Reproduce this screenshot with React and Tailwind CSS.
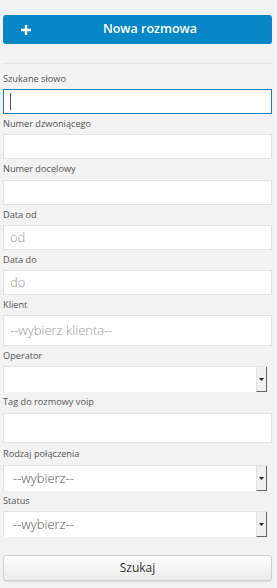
import React from 'react'

const font = { fontFamily: '"Open Sans", "Noto Sans", sans-serif' }

const Label = ({ children, h = 'h-[20px]' }) => (
  <div className={`${h} flex items-center pb-[1px] text-[9.2px] text-[#555]`}>{children}</div>
)

const TextBox = ({ h = 'h-[25px]', placeholder, focused }) => (
  <div
    className={`${h} w-full bg-white flex items-center px-[6px] text-[13px] font-light text-[#9a9a9a] ${
      focused ? 'border border-[#1b7fbd]' : 'border border-[#e2e2e2]'
    }`}
  >
    {focused && <span className="block w-px h-[17px] bg-[#555]" />}
    {placeholder}
  </div>
)

const SelectBox = ({ value }) => (
  <div className="h-[26px] w-[264px] flex bg-white border border-[#e2e2e2] border-r-0 border-b-0">
    <div className="flex-1 flex items-center px-[9px] text-[13px] font-light text-[#555]">{value}</div>
    <div className="w-[11px] flex items-center justify-center bg-[#f0f0f0] border-l border-[#e2e2e2] border-r border-r-[#666] border-b border-b-[#666]">
      <svg width="5" height="3" viewBox="0 0 5 3">
        <path d="M0 0h5L2.5 3z" fill="#222" />
      </svg>
    </div>
  </div>
)

export default function App() {
  return (
    <div className="w-[277px] min-h-[588px] bg-[#f2f2f2] pl-[3px] pr-[5px] pt-[15px]" style={font}>
      <button className="h-[29px] w-full rounded-[3px] bg-[#0787c7] flex items-center text-white">
        <span className="pl-[18px] w-[28px] flex">
          <svg width="10" height="10" viewBox="0 0 10 10">
            <path d="M3.8 0h2.4v3.8H10v2.4H6.2V10H3.8V6.2H0V3.8h3.8z" fill="#fff" />
          </svg>
        </span>
        <span className="flex-1 text-center pr-[3px] text-[12.5px] font-semibold">Nowa rozmowa</span>
      </button>

      <div className="mt-[19px] h-px bg-[#e6e6e6]" />

      <div className="mt-[5px]">
        <Label>Szukane słowo</Label>
        <TextBox focused />
        <Label>Numer dzwoniącego</Label>
        <TextBox />
        <Label h="h-[21px]">Numer docelowy</Label>
        <TextBox />
        <Label>Data od</Label>
        <TextBox placeholder="od" />
        <Label>Data do</Label>
        <TextBox placeholder="do" />
        <Label>Klient</Label>
        <TextBox h="h-[31px]" placeholder="--wybierz klienta--" />
        <Label>Operator</Label>
        <SelectBox value="" />
        <Label h="h-[21px]">Tag do rozmowy voip</Label>
        <TextBox h="h-[30px]" />
        <Label h="h-[22px]">Rodzaj połączenia</Label>
        <SelectBox value="--wybierz--" />
        <Label>Status</Label>
        <SelectBox value="--wybierz--" />
      </div>

      <button className="mt-[18px] h-[26px] w-full rounded-[3px] border border-[#cfcfcf] bg-gradient-to-b from-[#fdfdfd] to-[#ececec] text-[12px] text-[#333] shadow-[0_1px_1px_rgba(0,0,0,0.08)]">
        Szukaj
      </button>
    </div>
  )
}
